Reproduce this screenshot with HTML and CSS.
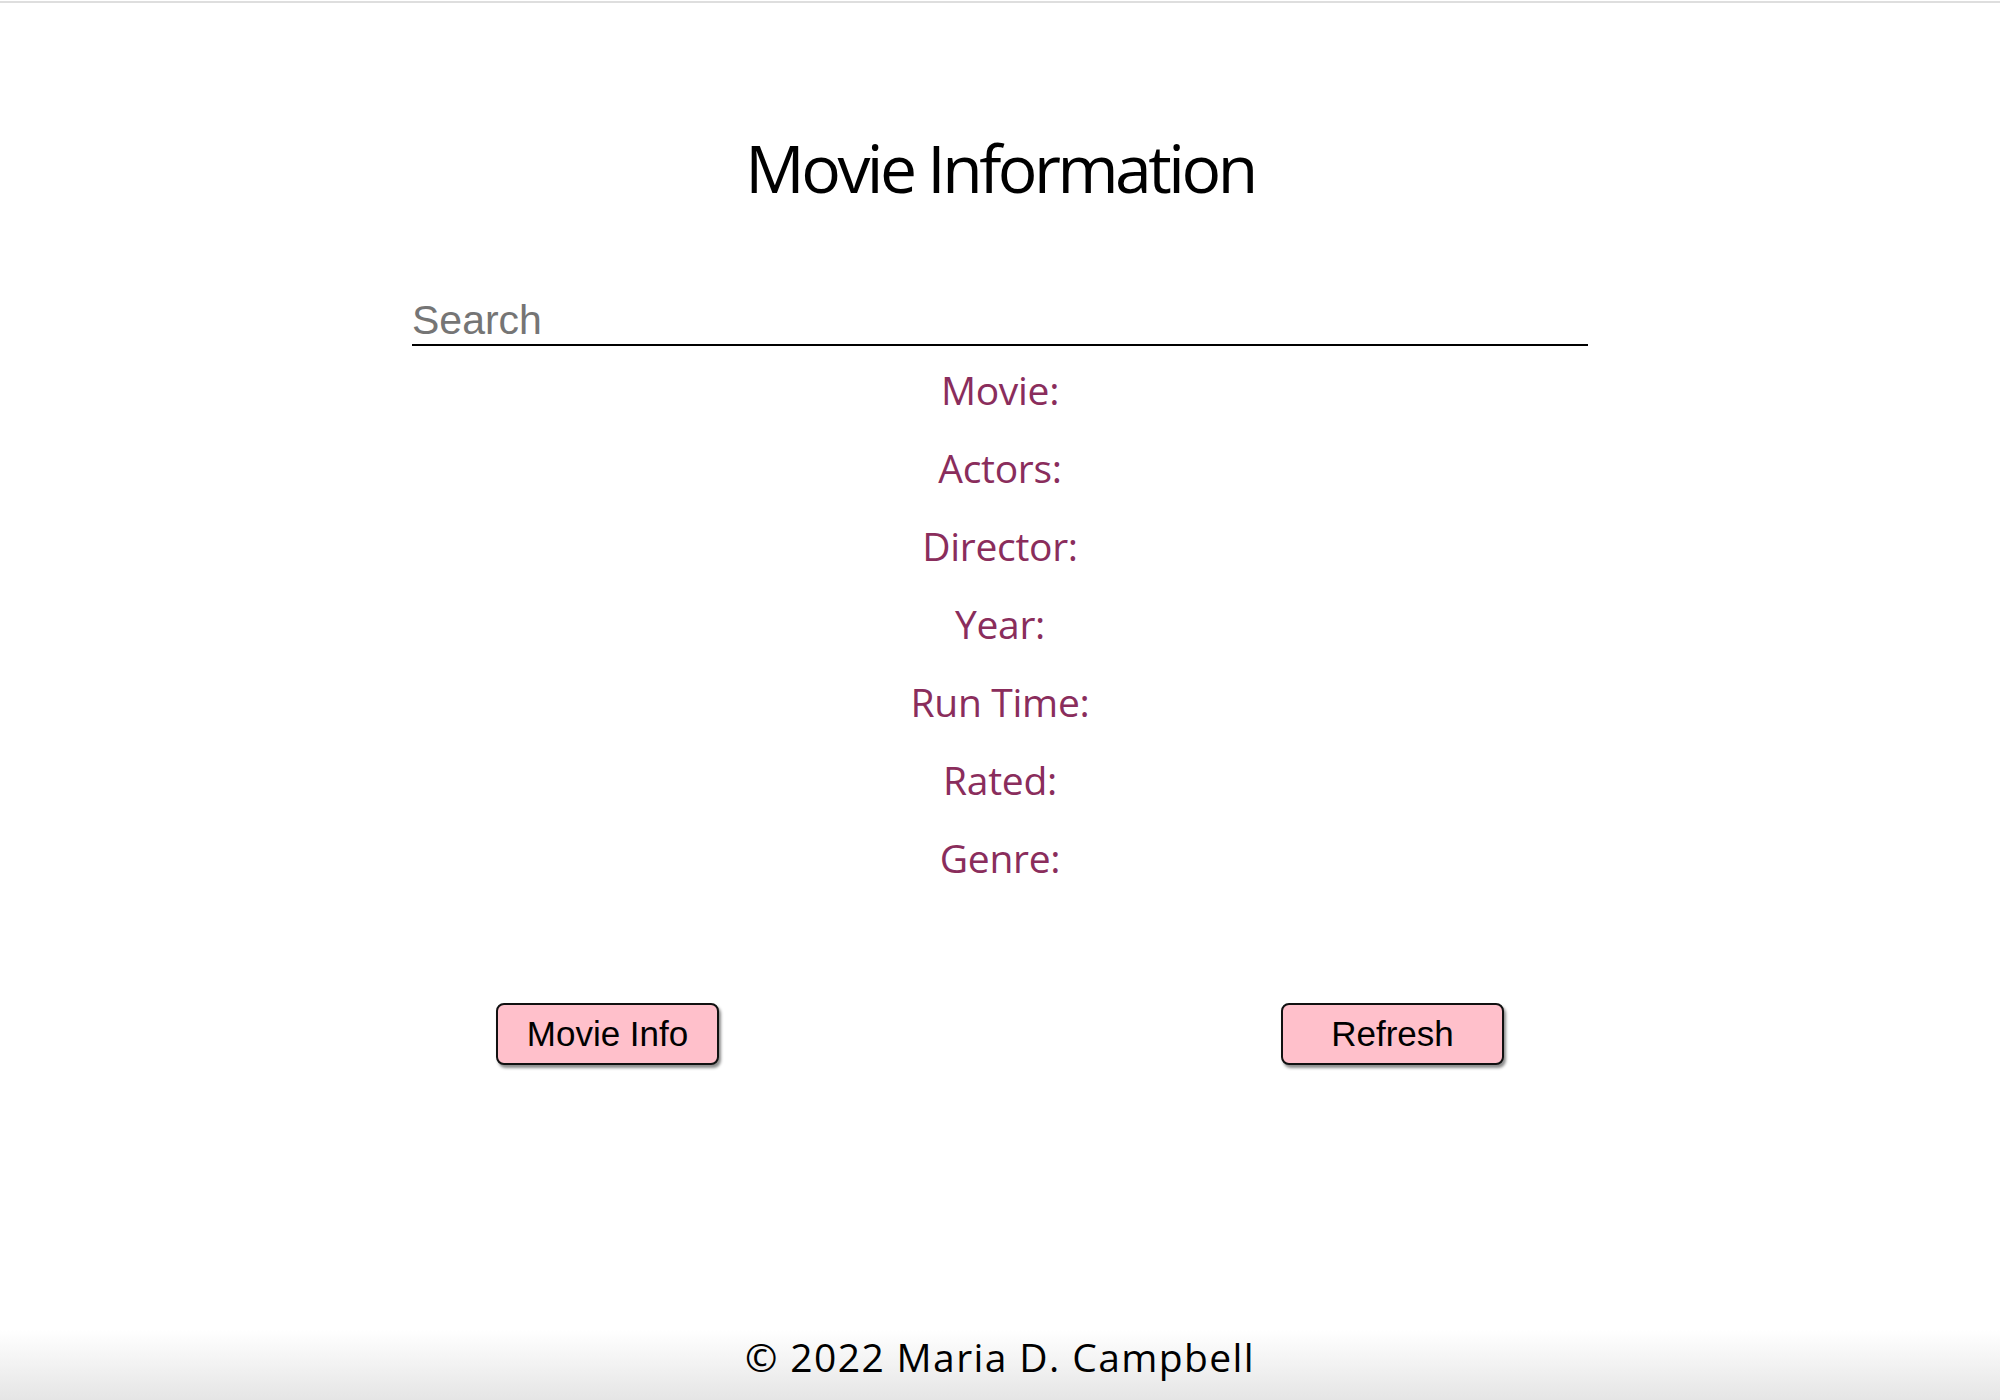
FILE: index.html
```html
<!DOCTYPE html>
<html lang="en">
<head>
<meta charset="utf-8">
<title>Movie Information</title>
<link rel="stylesheet" href="styles.css">
</head>
<body>
<div class="topline"></div>
<main class="page">
  <h1 class="title">Movie Information</h1>
  <input class="search" type="text" placeholder="Search">
  <div class="fields">
    <p class="field">Movie:</p>
    <p class="field">Actors:</p>
    <p class="field">Director:</p>
    <p class="field">Year:</p>
    <p class="field">Run Time:</p>
    <p class="field">Rated:</p>
    <p class="field">Genre:</p>
  </div>
  <div class="actions">
    <button class="btn" type="button">Movie Info</button>
    <button class="btn" type="button">Refresh</button>
  </div>
</main>
<footer class="footer">© 2022 Maria D. Campbell</footer>
</body>
</html>
```

FILE: styles.css
```css
html, body {
  height: 100%;
}

body {
  margin: 0;
  display: flex;
  flex-direction: column;
  background: #ffffff;
  font-family: "Open Sans", "Noto Sans", sans-serif;
  color: #000;
}

.topline {
  height: 2px;
  margin-top: 1px;
  background: #dedede;
  flex: none;
}

.page {
  flex: 1;
  display: flex;
  flex-direction: column;
  align-items: center;
}

.title {
  margin: 120px 0 0;
  font-size: 66px;
  line-height: 88px;
  font-weight: 500;
  letter-spacing: -3.5px;
  text-align: center;
}

.search {
  display: block;
  box-sizing: content-box;
  width: 1176px;
  height: 48px;
  margin: 85px 0 0;
  padding: 0;
  border: none;
  border-bottom: 2px solid #000;
  outline: none;
  background: transparent;
  font-family: "Liberation Sans", Arial, sans-serif;
  font-size: 41px;
  color: #000;
}

.search::placeholder {
  color: #757575;
}

.fields {
  margin-top: 5px;
  display: flex;
  flex-direction: column;
  align-items: center;
}

.field {
  margin: 0;
  font-size: 39px;
  line-height: 78px;
  color: #8a2d5c;
  letter-spacing: -0.3px;
}

.actions {
  margin-top: 106px;
  display: flex;
  justify-content: center;
  gap: 562px;
}

.btn {
  box-sizing: border-box;
  width: 223px;
  height: 62px;
  padding: 0;
  border: 2px solid #111;
  border-radius: 8px;
  background: #ffc0cb;
  box-shadow: 2px 3px 3px rgba(0, 0, 0, 0.45);
  font-family: "Liberation Sans", Arial, sans-serif;
  font-size: 35px;
  color: #000;
}

.footer {
  flex: none;
  height: 54px;
  padding-bottom: 16px;
  line-height: 54px;
  text-align: center;
  font-size: 39px;
  font-weight: 500;
  letter-spacing: 1.4px;
  background: linear-gradient(to bottom, #ffffff, #e5e5e5);
}
```
